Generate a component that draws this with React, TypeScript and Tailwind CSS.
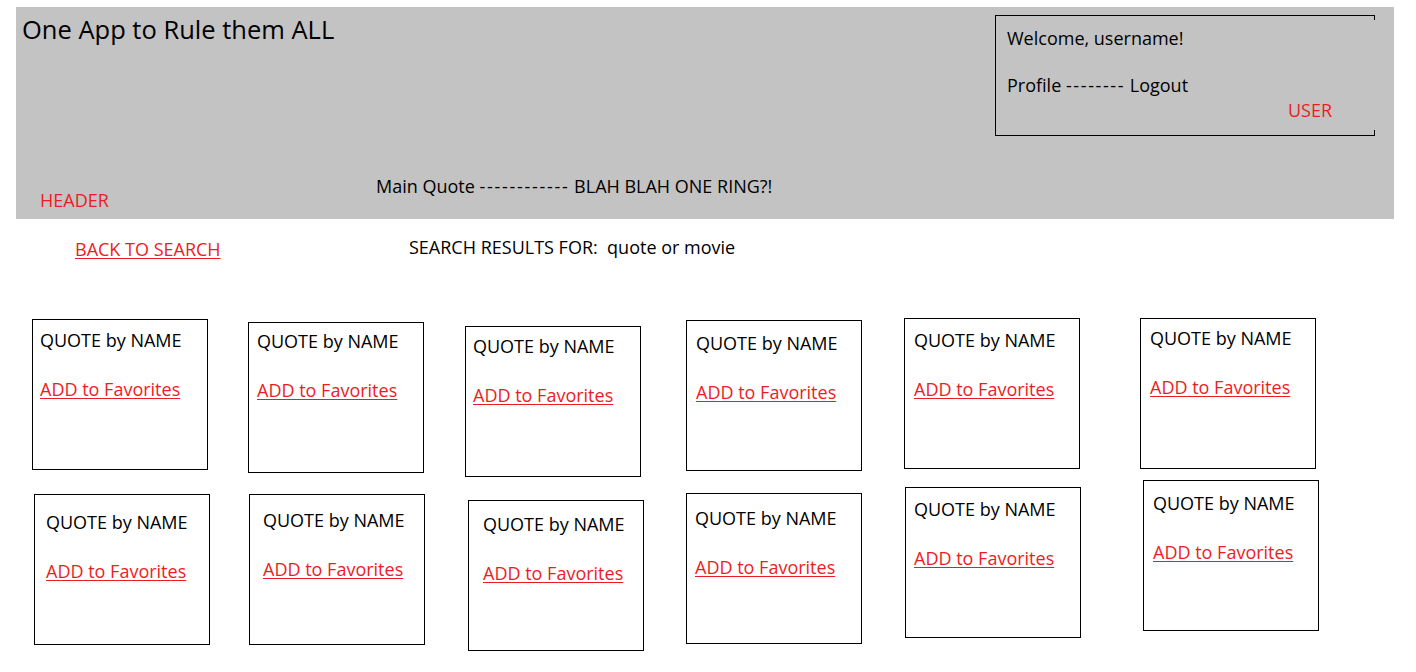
import React from 'react';

type CardSpot = {
  ml: string;
  mt: string;
  pad: string;
};

const topRow: CardSpot[] = [
  { ml: 'ml-[32px]', mt: 'mt-[1px]', pad: 'pl-[7px] pt-[8px]' },
  { ml: 'ml-[40px]', mt: 'mt-[4px]', pad: 'pl-[8px] pt-[6px]' },
  { ml: 'ml-[41px]', mt: 'mt-[8px]', pad: 'pl-[7px] pt-[7px]' },
  { ml: 'ml-[45px]', mt: 'mt-[2px]', pad: 'pl-[9px] pt-[10px]' },
  { ml: 'ml-[42px]', mt: 'mt-0', pad: 'pl-[9px] pt-[9px]' },
  { ml: 'ml-[60px]', mt: 'mt-0', pad: 'pl-[9px] pt-[7px]' },
];

const bottomRow: CardSpot[] = [
  { ml: 'ml-[34px]', mt: 'mt-[14px]', pad: 'pl-[11px] pt-[15px]' },
  { ml: 'ml-[39px]', mt: 'mt-[14px]', pad: 'pl-[13px] pt-[13px]' },
  { ml: 'ml-[43px]', mt: 'mt-[20px]', pad: 'pl-[14px] pt-[11px]' },
  { ml: 'ml-[42px]', mt: 'mt-[13px]', pad: 'pl-[8px] pt-[12px]' },
  { ml: 'ml-[43px]', mt: 'mt-[7px]', pad: 'pl-[8px] pt-[9px]' },
  { ml: 'ml-[62px]', mt: 'mt-0', pad: 'pl-[9px] pt-[10px]' },
];

const QuoteCard: React.FC<{ spot: CardSpot }> = ({ spot }) => (
  <div className={`${spot.ml} ${spot.mt} ${spot.pad} w-[176px] h-[151px] shrink-0 border border-black bg-white`}>
    <p className="leading-[24px] text-black">QUOTE by NAME</p>
    <a href="#" className="mt-[25px] block w-fit leading-[24px] text-[#ed1c24] underline underline-offset-2">
      ADD to Favorites
    </a>
  </div>
);

const App: React.FC = () => {
  return (
    <div className="w-[1416px] h-[672px] overflow-hidden bg-white pt-[7px] font-['Open_Sans',sans-serif] text-[18px] text-black">
      {/* Header */}
      <header className="ml-[16px] w-[1378px] h-[212px] bg-[#c3c3c3] flex flex-col">
        <div className="flex items-start justify-between">
          <h1 className="ml-[6px] mt-[6px] text-[25.5px] leading-[32px] font-normal">One App to Rule them ALL</h1>

          <div className="relative mt-[8px] mr-[19px] w-[380px] h-[121px] border-l border-t border-b border-black pl-[11px] pt-[10px]">
            <span className="absolute right-0 top-0 w-px h-[4px] bg-black" />
            <span className="absolute right-0 bottom-0 w-px h-[5px] bg-black" />
            <p className="leading-[24px]">Welcome, username!</p>
            <p className="mt-[23px] leading-[24px]">
              Profile <span className="tracking-[1.6px]">--------</span> Logout
            </p>
            <p className="mt-px ml-[281px] leading-[24px] text-[#ed1c24]">USER</p>
          </div>
        </div>

        <div className="mt-[38px] flex items-start">
          <span className="ml-[24px] mt-[14px] w-[336px] shrink-0 leading-[24px] text-[#ed1c24]">HEADER</span>
          <span className="leading-[24px]">
            Main Quote <span className="tracking-[1.7px]">------------</span> BLAH BLAH ONE RING?!
          </span>
        </div>
      </header>

      {/* Search bar */}
      <div className="h-[99px] flex items-start">
        <a href="#" className="ml-[75px] mt-[18px] w-[334px] shrink-0 leading-[24px] text-[#ed1c24]">
          <span className="underline underline-offset-2">BACK TO SEARCH</span>
        </a>
        <p className="mt-[16px] leading-[24px]">SEARCH RESULTS FOR:&nbsp; quote or movie</p>
      </div>

      {/* Results */}
      <div className="flex items-start h-[162px]">
        {topRow.map((spot, i) => (
          <QuoteCard key={`top-${i}`} spot={spot} />
        ))}
      </div>
      <div className="flex items-start">
        {bottomRow.map((spot, i) => (
          <QuoteCard key={`bottom-${i}`} spot={spot} />
        ))}
      </div>
    </div>
  );
};

export default App;
